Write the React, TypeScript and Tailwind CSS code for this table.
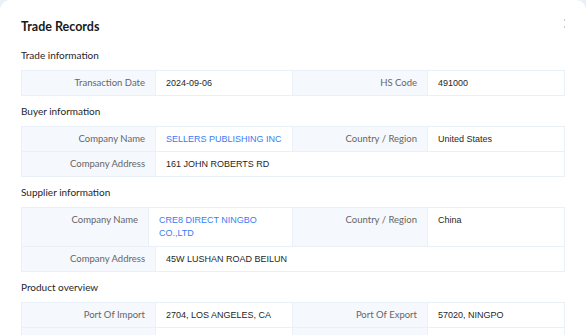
import React from 'react';

const sans = "font-['Lato',sans-serif]";
const arial = "font-['Liberation_Sans',Arial,sans-serif]";

function Label({ children }: { children: React.ReactNode }) {
    return (
        <div className={`${sans} bg-[#f5f8fd] border-r border-[#eaf0f8] pr-[10px] py-[6px] text-right text-[9.5px] leading-[12px] text-[#666]`}>
            {children}
        </div>
    );
}

function Value({ children, link, tall }: { children: React.ReactNode; link?: boolean; tall?: boolean }) {
    return (
        <div
            className={`${arial} border-r border-[#eaf0f8] pl-[10px] pr-[6px] py-[6px] text-[9px] last:border-r-0 ${
                tall ? 'leading-[13px]' : 'leading-[12px]'
            } ${link ? 'text-[#3a7bf3]' : 'text-[#1f1f1f]'}`}
        >
            {children}
        </div>
    );
}

function Heading({ children, first }: { children: React.ReactNode; first?: boolean }) {
    return (
        <h3 className={`${sans} ${first ? 'mt-[9px]' : 'mt-[6px]'} mb-[6px] h-[18px] text-[10px] leading-[18px] text-[#262626]`}>
            {children}
        </h3>
    );
}

export default function App() {
    return (
        <div className="w-[586px] h-[335px] overflow-hidden bg-[#e9f0f8]">
            <div className="relative h-[345px] rounded-[10px] bg-white px-[21px] pt-[17px]">
                {/* scrollbar dots */}
                <div className="absolute right-[21px] top-[19px] w-[1px] h-[2px] bg-[#c8c8c8]" />
                <div className="absolute right-[21px] top-[26px] w-[1px] h-[2px] bg-[#c8c8c8]" />

                <h2 className={`${sans} h-[20px] text-[12.5px] leading-[20px] font-bold text-[#1a1a1a]`}>Trade Records</h2>

                <Heading first>Trade information</Heading>
                <div className="border border-[#eaf0f8]">
                    <div className="grid grid-cols-[134px_137px_135px_1fr]">
                        <Label>Transaction Date</Label>
                        <Value>2024-09-06</Value>
                        <Label>HS Code</Label>
                        <Value>491000</Value>
                    </div>
                </div>

                <Heading>Buyer information</Heading>
                <div className="border border-[#eaf0f8]">
                    <div className="grid grid-cols-[134px_137px_135px_1fr] border-b border-[#eaf0f8]">
                        <Label>Company Name</Label>
                        <Value link>SELLERS PUBLISHING INC</Value>
                        <Label>Country / Region</Label>
                        <Value>United States</Value>
                    </div>
                    <div className="grid grid-cols-[134px_1fr]">
                        <Label>Company Address</Label>
                        <Value>161 JOHN ROBERTS RD</Value>
                    </div>
                </div>

                <Heading>Supplier information</Heading>
                <div className="border border-[#eaf0f8]">
                    <div className="grid grid-cols-[127px_144px_135px_1fr] border-b border-[#eaf0f8]">
                        <Label>Company Name</Label>
                        <Value link tall>
                            CRE8 DIRECT NINGBO
                            <br />
                            CO.,LTD
                        </Value>
                        <Label>Country / Region</Label>
                        <Value>China</Value>
                    </div>
                    <div className="grid grid-cols-[134px_1fr]">
                        <Label>Company Address</Label>
                        <Value>45W LUSHAN ROAD BEILUN</Value>
                    </div>
                </div>

                <Heading>Product overview</Heading>
                <div className="border border-[#eaf0f8]">
                    <div className="grid grid-cols-[134px_137px_135px_1fr] border-b border-[#eaf0f8]">
                        <Label>Port Of Import</Label>
                        <Value>2704, LOS ANGELES, CA</Value>
                        <Label>Port Of Export</Label>
                        <Value>57020, NINGPO</Value>
                    </div>
                    <div className="grid grid-cols-[134px_137px_135px_1fr]">
                        <Label>&nbsp;</Label>
                        <Value>&nbsp;</Value>
                        <Label>&nbsp;</Label>
                        <Value>&nbsp;</Value>
                    </div>
                </div>
            </div>
        </div>
    );
}
